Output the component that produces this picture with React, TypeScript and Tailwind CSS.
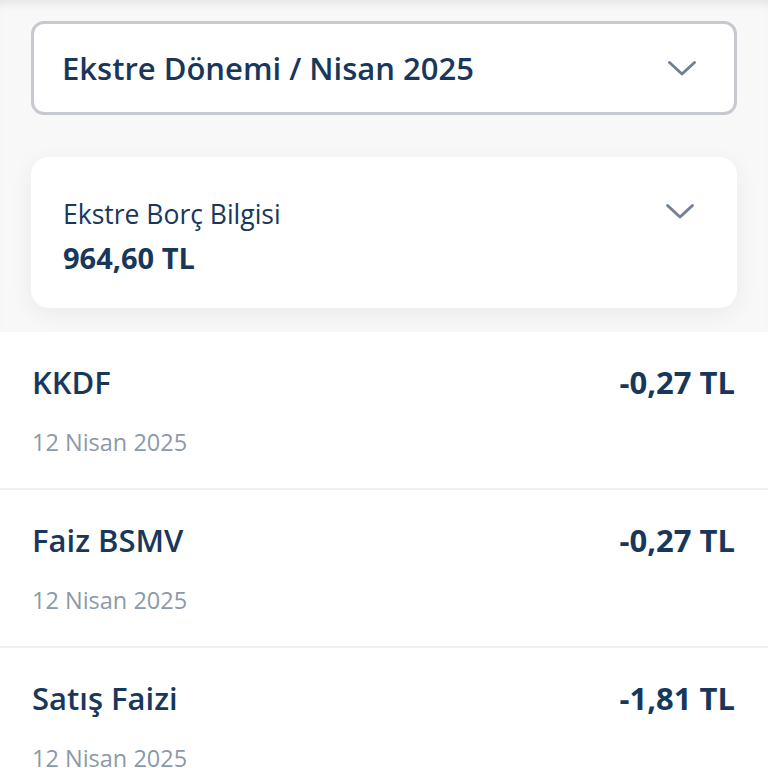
import React from "react";

interface Txn {
  title: string;
  amount: string;
  date: string;
}

const TXNS: Txn[] = [
  { title: "KKDF", amount: "-0,27 TL", date: "12 Nisan 2025" },
  { title: "Faiz BSMV", amount: "-0,27 TL", date: "12 Nisan 2025" },
  { title: "Satış Faizi", amount: "-1,81 TL", date: "12 Nisan 2025" },
];

function Chevron({ className = "" }: { className?: string }) {
  return (
    <svg width="30" height="17" viewBox="0 0 30 17" fill="none" className={className}>
      <polyline
        points="2.5,2.5 15,14 27.5,2.5"
        stroke="#6f8193"
        strokeWidth="3"
        strokeLinecap="round"
        strokeLinejoin="round"
      />
    </svg>
  );
}

export default function App() {
  return (
    <div
      className="w-[768px] h-[768px] overflow-hidden bg-white text-[#18375b]"
      style={{ fontFamily: '"Open Sans", "Noto Sans", sans-serif' }}
    >
      {/* Üst bölüm — dönem seçimi ve borç kartı */}
      <section className="bg-[#f8f8f9] px-[31px] pt-[21px] pb-[24px] shadow-[inset_0_10px_12px_-8px_rgba(0,0,0,0.10)]">
        <button className="w-full h-[94px] flex items-center justify-between bg-white border-[3px] border-[#c6c9ce] rounded-[13px] pl-[28px] pr-[37px]">
          <span className="text-[31px] font-semibold">Ekstre Dönemi / Nisan 2025</span>
          <Chevron />
        </button>

        <div className="mt-[42px] h-[151px] bg-white rounded-[18px] shadow-[0_6px_24px_rgba(0,0,0,0.06)] flex justify-between pl-[32px] pr-[42px] pt-[40px]">
          <div className="flex flex-col">
            <span className="text-[26.5px] leading-[34px]">Ekstre Borç Bilgisi</span>
            <span className="mt-[7px] text-[29px] leading-[40px] font-bold">964,60 TL</span>
          </div>
          <Chevron className="mt-[6px]" />
        </div>
      </section>

      {/* Hareket listesi */}
      <div className="flex flex-col">
        {TXNS.map((t, i) => (
          <div
            key={i}
            className={
              i < TXNS.length - 1
                ? "px-[32px] pr-[33px] pt-[30px] pb-[29px] border-b-2 border-[#eef0f3]"
                : "px-[32px] pr-[33px] pt-[30px] pb-[29px]"
            }
          >
            <div className="flex items-center justify-between h-[40px]">
              <span className="text-[31px] font-semibold">{t.title}</span>
              <span className="text-[31px] font-bold">{t.amount}</span>
            </div>
            <div className="mt-[25px] h-[32px] flex items-center text-[23.5px] text-[#8b99a9]">
              {t.date}
            </div>
          </div>
        ))}
      </div>
    </div>
  );
}
